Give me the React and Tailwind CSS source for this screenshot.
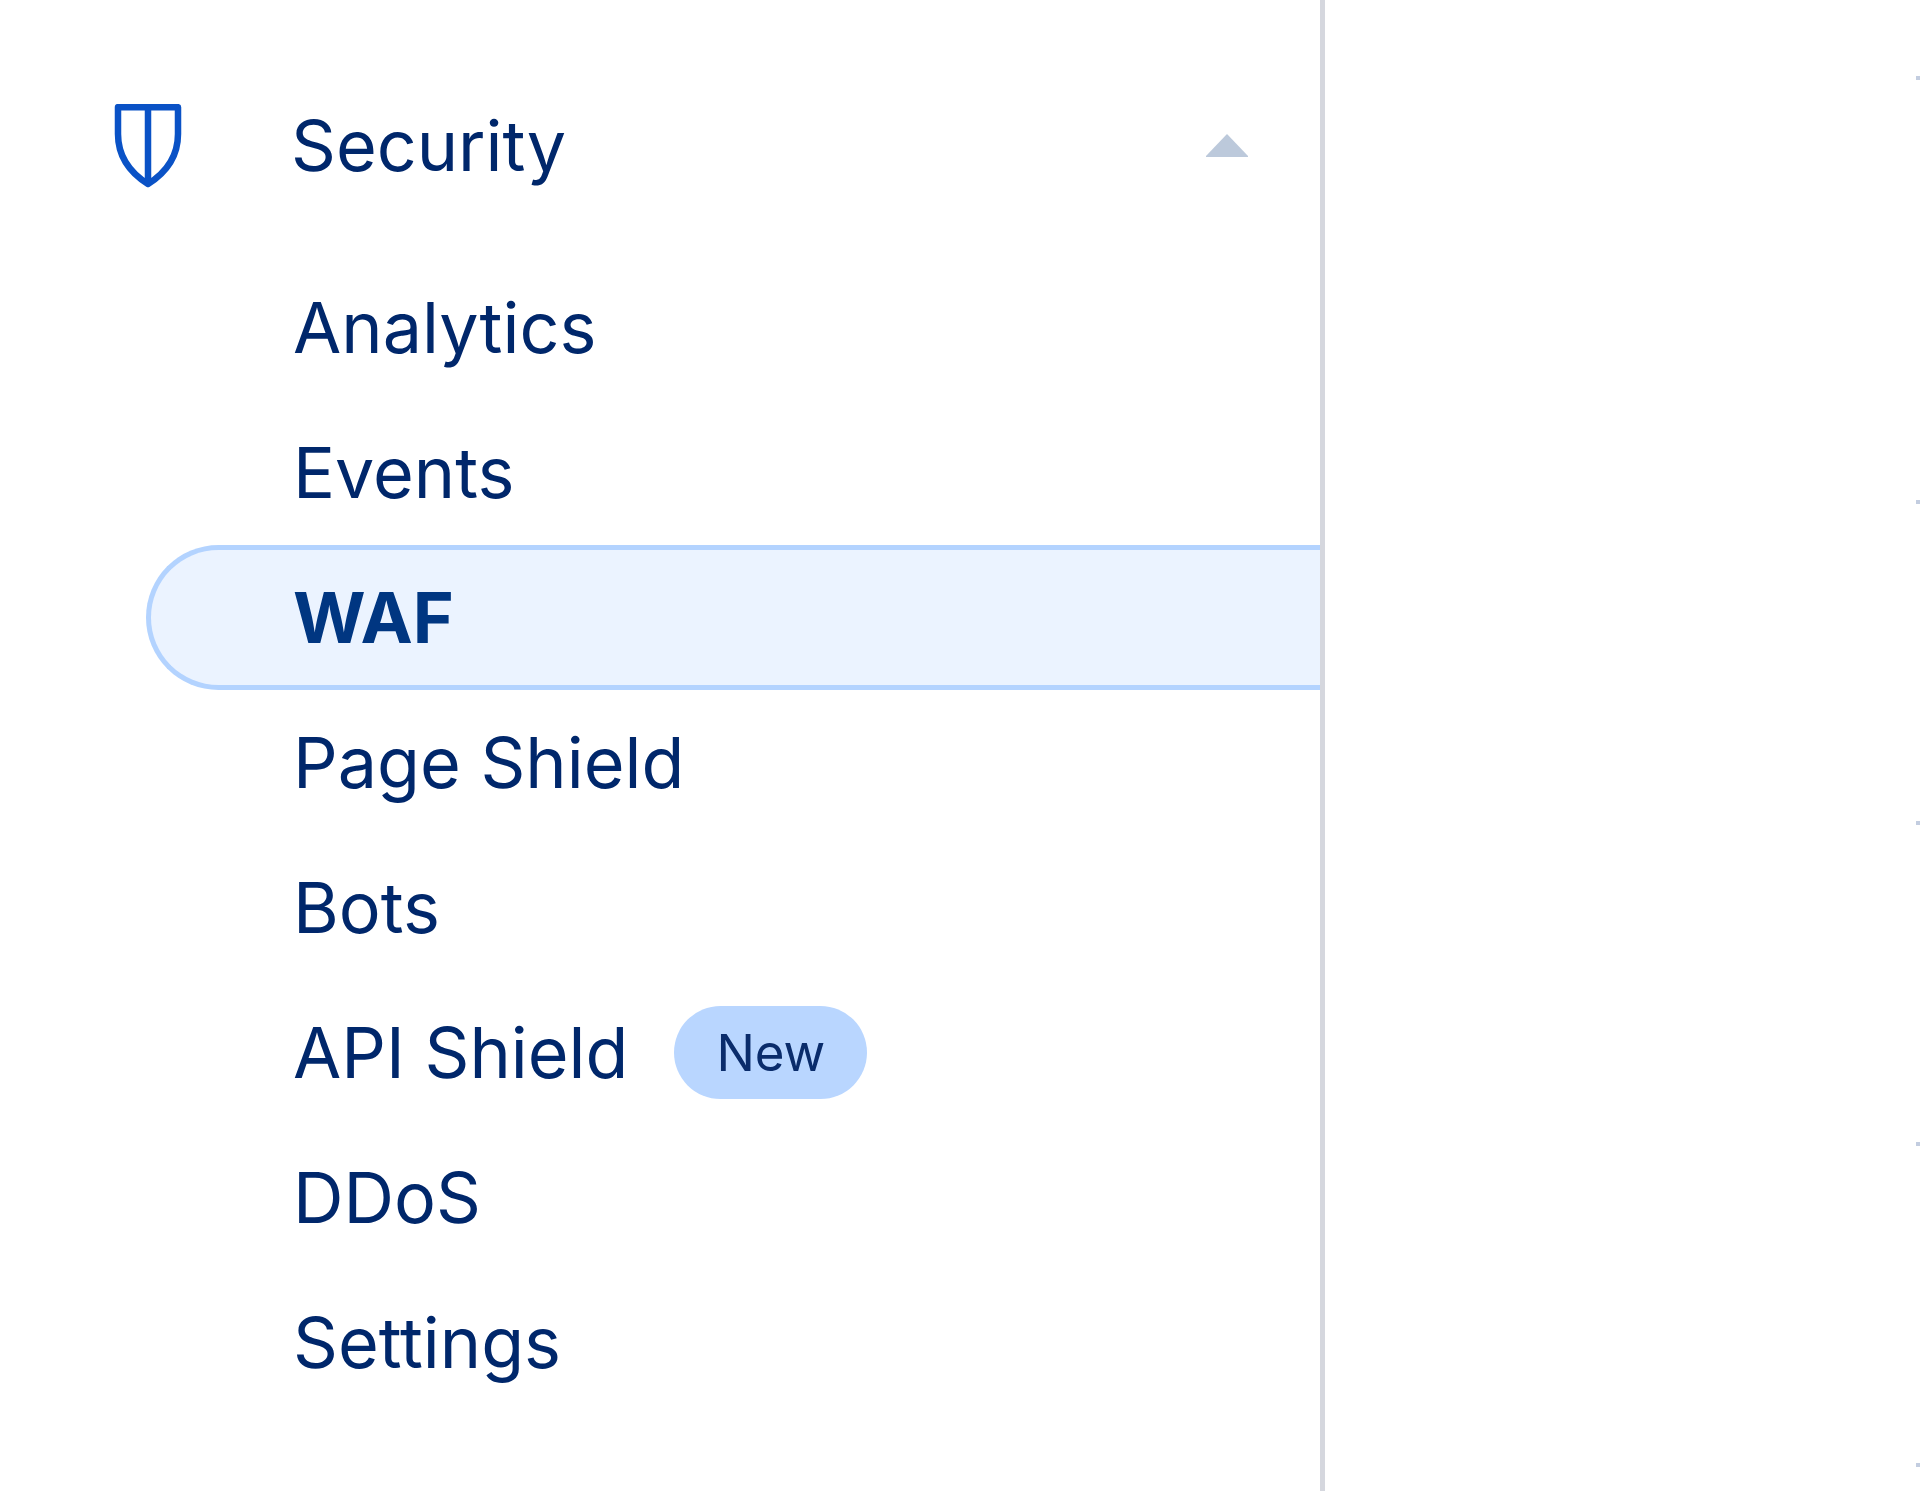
const items = [
  { label: "Analytics" },
  { label: "Events" },
  { label: "WAF", active: true },
  { label: "Page Shield" },
  { label: "Bots" },
  { label: "API Shield", badge: "New" },
  { label: "DDoS" },
  { label: "Settings" },
];

function ShieldIcon() {
  return (
    <svg className="h-[84px] w-[68px] shrink-0" viewBox="0 0 68 84" fill="none" stroke="#0a52c6" strokeWidth="6.5" strokeLinejoin="round" aria-hidden="true">
      <path d="M4 3.2H64V30C64 52 53 68 34 80C15 68 4 52 4 30Z" />
      <path d="M34 3.2V80" />
    </svg>
  );
}

function NavItem({ label, badge, active }) {
  return (
    <li>
      <a
        href="#"
        aria-current={active ? "page" : undefined}
        className={
          "flex h-[145px] items-center gap-[46px] rounded-l-full border-y-5 border-l-5 pl-[142px] text-[70px] leading-none " +
          (active
            ? "border-[#b3d3ff] bg-[#ebf3ff] font-bold text-[#003681]"
            : "border-transparent text-[#00276b]")
        }
      >
        {label}
        {badge && (
          <span className="flex h-[93px] items-center rounded-full bg-[#b9d6ff] px-[42px] text-[51px] text-[#0a2c6b]">{badge}</span>
        )}
      </a>
    </li>
  );
}

export default function App() {
  return (
    <div className="flex min-h-screen bg-white font-['Inter',sans-serif]">
      <nav className="w-[1325px] shrink-0 border-r-5 border-[#d5d7de] pt-[73px]">
        <button type="button" aria-expanded="true" className="flex h-[145px] w-full items-center pr-[72px] pl-[114px] text-left text-[70px] leading-none text-[#00276b]">
          <ShieldIcon />
          <span className="ml-[109px] grow">Security</span>
          <svg className="h-6 w-[42px]" viewBox="0 0 42 24" fill="#bcc9db" aria-hidden="true">
            <path d="M21 0L42 22V23H0V22Z" />
          </svg>
        </button>
        <ul className="mt-[37px] pl-[146px]">
          {items.map((item) => (
            <NavItem key={item.label} {...item} />
          ))}
        </ul>
      </nav>
      <main className="ml-auto w-1 pt-[76px]">
        <section className="h-[424px] border-t-4 border-[#c3cde0]" />
        <section className="h-[321px] border-t-4 border-[#c3cde0]" />
        <section className="h-[321px] border-t-4 border-[#c3cde0]" />
        <section className="h-[321px] border-t-4 border-[#c3cde0]" />
        <section className="border-t-4 border-[#c3cde0]" />
      </main>
    </div>
  );
}
